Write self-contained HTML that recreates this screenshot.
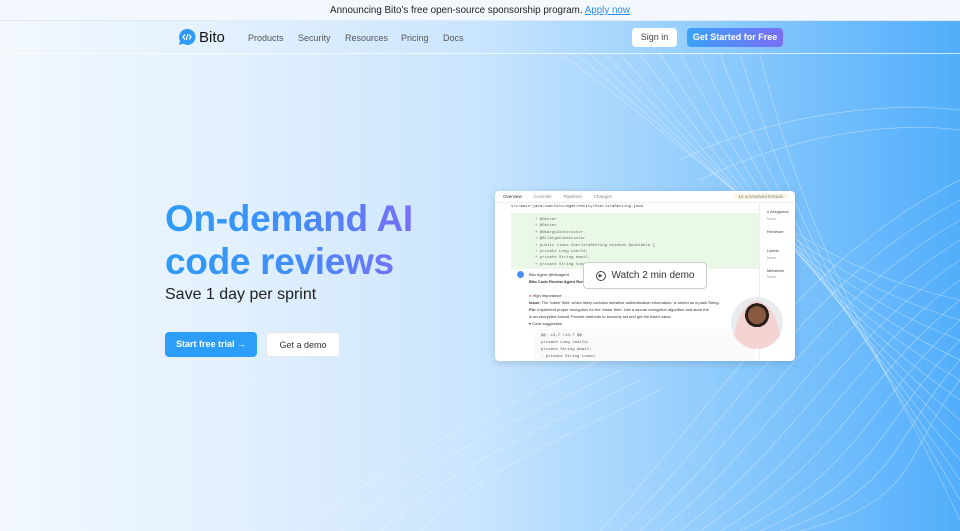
<!DOCTYPE html>
<html><head><meta charset="utf-8">
<style>
*{margin:0;padding:0;box-sizing:border-box}
body{width:960px;height:531px;overflow:hidden;font-family:"Liberation Sans",sans-serif;position:relative;background:linear-gradient(90deg,#f2f8fe 0%,#e2f0fe 25%,#c9e5fe 50%,#8ecbfd 75%,#52aefb 100%)}
.banner{position:absolute;left:0;top:0;width:960px;height:21px;background:#f3f8fe;text-align:center;font-size:9.8px;line-height:21px;color:#222;border-bottom:1px solid #dfeaf7}
.banner a{color:#2a8ef0;text-decoration:underline}
.navline{position:absolute;left:0;top:53px;width:960px;height:1px;background:rgba(255,255,255,.7)}
.logo{position:absolute;left:178px;top:28px;display:flex;align-items:center;gap:3px;font-size:15px;color:#111}
.nav{position:absolute;top:33px;font-size:9px;color:#555}
.btn{position:absolute;border-radius:4px;font-size:9px;text-align:center}
svg.mesh{position:absolute;left:0;top:0}
h1{position:absolute;left:165px;top:197px;font-size:37px;line-height:43px;font-weight:bold;letter-spacing:-.3px;background:linear-gradient(90deg,#2f9bf7 0%,#3f8ff8 50%,#7a6cf7 100%);-webkit-background-clip:text;color:transparent}
.sub{position:absolute;left:165px;top:286px;font-size:16px;color:#222}
.card{position:absolute;left:495px;top:191px;width:300px;height:170px;background:#fff;border-radius:4px;box-shadow:0 2px 8px rgba(0,0,0,.15);overflow:hidden;font-size:4px;color:#666}
.mono{font-family:"Liberation Mono",monospace}
</style></head><body>
<svg class="mesh" width="960" height="531" viewBox="0 0 960 531" fill="none" stroke="rgba(255,255,255,.4)" stroke-width=".7">
<path d="M560 54 C700 150 780 260 960 300"/>
<path d="M575 54 C710 160 790 270 960 320"/>
<path d="M590 54 C720 170 800 280 960 340"/>
<path d="M605 54 C730 180 810 290 960 360"/>
<path d="M620 54 C740 190 820 300 960 380"/>
<path d="M640 54 C750 200 830 310 960 400"/>
<path d="M660 54 C760 210 840 320 960 420"/>
<path d="M680 54 C770 220 850 330 960 440"/>
<path d="M700 54 C780 230 860 340 960 460"/>
<path d="M720 54 C790 240 870 350 960 480"/>
<path d="M740 54 C800 250 880 360 960 500"/>
<path d="M760 54 C810 260 890 370 960 520"/>
<path d="M960 180 C800 260 720 400 600 531"/>
<path d="M960 200 C810 280 740 410 620 531"/>
<path d="M960 220 C820 300 760 420 640 531"/>
<path d="M960 240 C830 320 780 430 660 531"/>
<path d="M960 260 C840 340 800 440 680 531"/>
<path d="M960 280 C850 360 820 450 700 531"/>
<path d="M960 300 C860 380 840 460 720 531"/>
<path d="M960 320 C870 400 860 470 740 531"/>
<path d="M960 340 C880 420 880 480 760 531"/>
<path d="M960 360 C890 440 900 490 780 531"/>
<path d="M960 380 C900 460 920 500 800 531"/>
<path d="M300 531 C420 440 520 400 600 360"/>
<path d="M340 531 C440 450 540 410 620 370"/>
<path d="M380 531 C460 460 560 420 640 380"/>
<path d="M420 531 C480 470 580 430 660 390"/>
<path d="M960 130 C880 120 780 140 700 180"/>
<path d="M960 110 C870 100 760 120 680 160"/>
</svg>
<div class="banner">Announcing Bito’s free open-source sponsorship program. <a>Apply now</a></div>
<div class="navline"></div>
<div class="logo"><svg width="18" height="18" viewBox="0 0 18 18"><path d="M9 1a8 8 0 0 0-7 11.8L1 17l4.3-1.2A8 8 0 1 0 9 1z" fill="#2f9bf7"/><path d="M7 6.5 5 9l2 2.5M11 6.5 13 9l-2 2.5M9.8 6 8.2 12" stroke="#fff" stroke-width="1.2" fill="none"/></svg>Bito</div>
<div class="nav" style="left:248px">Products</div>
<div class="nav" style="left:298px">Security</div>
<div class="nav" style="left:345px">Resources</div>
<div class="nav" style="left:401px">Pricing</div>
<div class="nav" style="left:443px">Docs</div>
<div class="btn" style="left:632px;top:28px;width:45px;height:19px;background:#fff;line-height:19px;color:#444">Sign in</div>
<div class="btn" style="left:687px;top:28px;width:96px;height:19px;background:linear-gradient(90deg,#3aa2f8,#7b6ef6);line-height:19px;color:#fff;font-weight:bold">Get Started for Free</div>
<h1>On-demand AI<br>code reviews</h1>
<div class="sub">Save 1 day per sprint</div>
<div class="btn" style="left:165px;top:332px;width:92px;height:25px;background:#2d9ef8;line-height:25px;color:#fff;font-weight:bold">Start free trial →</div>
<div class="btn" style="left:266px;top:332px;width:74px;height:25px;background:#fff;line-height:25px;color:#333;border:1px solid #e3e7ec">Get a demo</div>
<div class="card">
 <div style="height:12px;border-bottom:1px solid #eee;display:flex;gap:12px;padding:3px 8px;font-size:4.5px;color:#888"><span style="color:#333">Overview</span><span>Commits</span><span>Pipelines</span><span>Changes</span><span style="margin-left:auto;background:#fdf3e0;padding:0 4px">16 unresolved threads</span></div>
 <div style="position:absolute;left:16px;top:14px;font-size:4px;color:#444" class="mono">src/main/java/com/bito/mgmt/entity/UserJiraSetting.java</div>
 <div class="mono" style="position:absolute;left:16px;top:22px;width:248px;height:56px;background:#eaf8e8;padding:4px 0 0 24px;font-size:4px;line-height:6.4px;color:#666">+ @Getter<br>+ @Setter<br>+ @NoArgsConstructor<br>+ @AllArgsConstructor<br>+ public class UserJiraSetting extends Auditable {<br>+     private Long userId;<br>+     private String email;<br>+     private String token;</div>
 <div style="position:absolute;left:264px;top:12px;width:1px;height:160px;background:#eee"></div>
 <div style="position:absolute;left:272px;top:18px;font-size:4px;line-height:6.5px;color:#444">0 Assignees<br><span style="color:#999">None</span><br><br>Reviewer<br><br><br>Labels<br><span style="color:#999">None</span><br><br>Milestone<br><span style="color:#999">None</span></div>
 <div style="position:absolute;left:22px;top:80px;width:7px;height:7px;border-radius:50%;background:#4b8ef7"></div>
 <div style="position:absolute;left:34px;top:80px;font-size:4px;line-height:7px;color:#333">Bito Agent @bitoagent<br><b>Bito Code Review Agent Run</b><br><br><span style="color:#e55">●</span> High importance<br><b>Issue:</b> The 'token' field, which likely contains sensitive authentication information, is stored as a plain String.<br><b>Fix:</b> Implement proper encryption for the 'token' field. Use a secure encryption algorithm and store the<br>in an encrypted format. Provide methods to securely set and get the token value.<br>▾ Code suggestion</div>
 <div class="mono" style="position:absolute;left:40px;top:138px;width:220px;height:40px;background:#fafafa;padding:4px 6px;font-size:4px;line-height:7px;color:#555">@@ -13,7 +13,7 @@<br>      private Long userId;<br>      private String email;<br>-     private String token;</div>
 <div style="position:absolute;left:88px;top:71px;width:124px;height:27px;background:#fff;border:1px solid #ccc;border-radius:4px;display:flex;align-items:center;justify-content:center;gap:6px;font-size:10px;color:#333"><span style="width:10px;height:10px;border:1px solid #444;border-radius:50%;font-size:5px;line-height:9px;text-align:center">▶</span>Watch 2 min demo</div>
 <div style="position:absolute;left:236px;top:106px;width:52px;height:52px;border-radius:50%;background:radial-gradient(circle at 50% 35%,#8a5a40 0 9px,#2b1f1a 9px 12px,transparent 12px),radial-gradient(ellipse at 50% 100%,#f4d3d3 0 24px,transparent 24px),#e8ecef"></div>
</div>
</body></html>
